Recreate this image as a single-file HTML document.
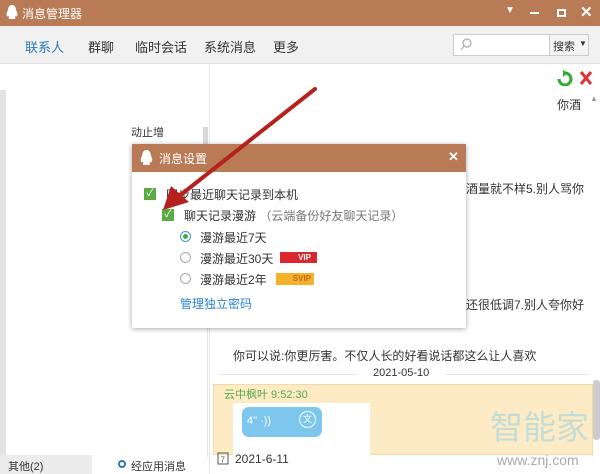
<!DOCTYPE html>
<html><head><meta charset="utf-8"><style>
*{margin:0;padding:0;box-sizing:border-box}
body{width:600px;height:474px;overflow:hidden;background:#fff;font-family:"Liberation Sans","Noto Sans CJK SC",sans-serif;font-size:12px;color:#333;position:relative}
.a{position:absolute;white-space:nowrap}
</style></head><body>
<div class="a" style="left:0;top:0;width:600px;height:26px;background:#b97a56;color:#fff">
 <svg class="a" style="left:6px;top:5px" width="12" height="15" viewBox="0 0 12 15"><path d="M6 0C3 0 2 3 2 5C1 7 0 9 1 11C2 12 3 11 3 11C3 13 2 14 4 14H8C10 14 9 13 9 11C9 11 10 12 11 11C12 9 11 7 10 5C10 3 9 0 6 0Z" fill="#fff"/></svg>
 <span class="a" style="left:22px;top:5px;font-size:12px">消息管理器</span>
 <span class="a" style="left:505px;top:5px;font-size:10px">▼</span>
 <span class="a" style="left:530px;top:12px;width:9px;height:2px;background:#fff"></span>
 <span class="a" style="left:557px;top:9px;width:9px;height:8px;border:2px solid #fff"></span>
 <span class="a" style="left:580px;top:3px;font-size:15px;font-weight:bold">✕</span>
</div>
<div class="a" style="left:0;top:26px;width:600px;height:38px;background:#f1f1f1;border-bottom:1px solid #e2e2e2">
 <span class="a" style="left:25px;top:11px;font-size:13px;color:#2a7ab8">联系人</span>
 <span class="a" style="left:88px;top:11px;font-size:13px">群聊</span>
 <span class="a" style="left:135px;top:11px;font-size:13px">临时会话</span>
 <span class="a" style="left:204px;top:11px;font-size:13px">系统消息</span>
 <span class="a" style="left:273px;top:11px;font-size:13px">更多</span>
 <div class="a" style="left:453px;top:8px;width:136px;height:22px;background:#fff;border:1px solid #ccc"></div>
 <svg class="a" style="left:460px;top:12px" width="12" height="14"><circle cx="7" cy="5" r="4" fill="none" stroke="#aaa" stroke-width="1.2"/><path d="M4 8L1 12" stroke="#aaa" stroke-width="1.2"/></svg>
 <div class="a" style="left:549px;top:8px;width:40px;height:22px;background:#f4f4f4;border:1px solid #ccc"></div>
 <span class="a" style="left:553px;top:12px;font-size:11px">搜索</span>
 <span class="a" style="left:579px;top:13px;font-size:8px">▼</span>
</div>
<div class="a" style="left:0;top:90px;width:6px;height:365px;background:#e3e3e3"></div>
<div class="a" style="left:130px;top:127px;width:78px;height:330px;background:#fff;border-right:1px solid #e6e6e6"></div>
<div class="a" style="left:203px;top:127px;width:5px;height:40px;background:#d9d9d9"></div>
<span class="a" style="left:131px;top:124px;font-size:11px">动止增</span>
<div class="a" style="left:0;top:455px;width:92px;height:19px;background:#ececec"></div>
<span class="a" style="left:8px;top:458px;font-size:11px">其他(2)</span>
<span class="a" style="left:118px;top:460px;width:8px;height:8px;border:2px solid #2a7ab8;border-radius:50%"></span>
<span class="a" style="left:131px;top:458px;font-size:11px">经应用消息</span>
<div class="a" style="left:209px;top:64px;width:1px;height:410px;background:#e6e6e6"></div>
<svg class="a" style="left:557px;top:70px" width="36" height="16"><path d="M2 9A6 6 0 1 0 8 3" stroke="#3a3" stroke-width="3" fill="none"/><path d="M6 0L11 3L6 7Z" fill="#3a3"/><path d="M24 2L34 14M34 2L24 14" stroke="#d33" stroke-width="3"/></svg>
<span class="a" style="left:557px;top:96px;font-size:12px">你酒</span>
<span class="a" style="left:590px;top:94px;font-size:8px;color:#999">▲</span>
<span class="a" style="left:466px;top:180px;font-size:12px">酒量就不样5.别人骂你</span>
<span class="a" style="left:466px;top:296px;font-size:12px">还很低调7.别人夸你好</span>
<span class="a" style="left:233px;top:347px;font-size:12px">你可以说:你更厉害。不仅人长的好看说话都这么让人喜欢</span>
<div class="a" style="left:218px;top:374px;width:140px;height:1px;background:#e5e5e5"></div>
<div class="a" style="left:445px;top:374px;width:145px;height:1px;background:#e5e5e5"></div>
<span class="a" style="left:373px;top:367px;font-size:11px">2021-05-10</span>
<div class="a" style="left:213px;top:384px;width:380px;height:71px;background:#fcebc5;border:1px solid #f3dba8"></div>
<span class="a" style="left:224px;top:386px;font-size:11px;color:#5aa84c">云中枫叶 9:52:30</span>
<div class="a" style="left:233px;top:403px;width:137px;height:52px;background:#fff"></div>
<div class="a" style="left:242px;top:407px;width:80px;height:30px;background:#7dc7ef;border-radius:7px"></div>
<span class="a" style="left:247px;top:415px;font-size:11px;color:#fff">4"  ·))</span>
<span class="a" style="left:299px;top:411px;width:17px;height:17px;border:1.5px solid #fff;border-radius:50%;color:#fff;font-size:9px;text-align:center;line-height:14px">文</span>
<div class="a" style="left:593px;top:380px;width:7px;height:60px;background:#ccc;border-radius:3px"></div>
<span class="a" style="left:490px;top:408px;font-size:33px;line-height:40px;color:#c3dcd6">智能家</span>
<span class="a" style="left:497px;top:452px;font-size:14px;color:#aaa">www.znj.com</span>
<svg class="a" style="left:217px;top:451px" width="12" height="14"><rect x="1" y="2" width="10" height="11" fill="none" stroke="#555"/><text x="3.5" y="11.5" font-size="8" fill="#555" font-family="Liberation Sans">7</text></svg>
<span class="a" style="left:235px;top:452px;font-size:12px">2021-6-11</span>
<div class="a" style="left:132px;top:144px;width:334px;height:184px;background:#fff;box-shadow:0 1px 5px rgba(0,0,0,.35)">
 <div style="height:28px;background:#b97a56;position:relative;color:#fff">
  <svg class="a" style="left:8px;top:6px" width="13" height="16" viewBox="0 0 12 15"><path d="M6 0C3 0 2 3 2 5C1 7 0 9 1 11C2 12 3 11 3 11C3 13 2 14 4 14H8C10 14 9 13 9 11C9 11 10 12 11 11C12 9 11 7 10 5C10 3 9 0 6 0Z" fill="#fff"/></svg>
  <span class="a" style="left:27px;top:6px;font-size:12px">消息设置</span>
  <span class="a" style="left:316px;top:5px;font-size:13px;font-weight:bold">✕</span>
 </div>
 <span class="a" style="left:12px;top:44px;width:12px;height:12px;background:#5aaa46;color:#fff;font-size:10px;line-height:12px;text-align:center">✓</span>
 <span class="a" style="left:34px;top:42px">同步最近聊天记录到本机</span>
 <span class="a" style="left:30px;top:65px;width:12px;height:12px;background:#5aaa46;color:#fff;font-size:10px;line-height:12px;text-align:center">✓</span>
 <span class="a" style="left:52px;top:63px">聊天记录漫游 <span style="color:#777">（云端备份好友聊天记录）</span></span>
 <span class="a" style="left:48px;top:87px;width:11px;height:11px;border:1px solid #4a8fd0;border-radius:50%"><span class="a" style="left:2px;top:2px;width:5px;height:5px;background:#3bb33b;border-radius:50%"></span></span>
 <span class="a" style="left:68px;top:85px">漫游最近7天</span>
 <span class="a" style="left:48px;top:108px;width:11px;height:11px;border:1px solid #aaa;border-radius:50%"></span>
 <span class="a" style="left:68px;top:106px">漫游最近30天</span>
 <span class="a" style="left:148px;top:108px;width:37px;height:11px;background:#d9282e;color:#fff;font-size:8px;line-height:11px;text-align:right;padding-right:6px;font-weight:bold">VIP</span>
 <span class="a" style="left:48px;top:129px;width:11px;height:11px;border:1px solid #aaa;border-radius:50%"></span>
 <span class="a" style="left:68px;top:127px">漫游最近2年</span>
 <span class="a" style="left:144px;top:129px;width:38px;height:12px;background:#f2b22a;color:#c62;font-size:8px;line-height:12px;text-align:right;padding-right:3px;font-weight:bold">SVIP</span>
 <span class="a" style="left:48px;top:151px;color:#2a85d0">管理独立密码</span>
</div>
<svg class="a" style="left:0;top:0" width="600" height="474"><path d="M315 89L178 197" stroke="#b5221e" stroke-width="4" stroke-linecap="round"/><path d="M163 210L171 186L189 202Z" fill="#b5221e"/></svg>
</body></html>
